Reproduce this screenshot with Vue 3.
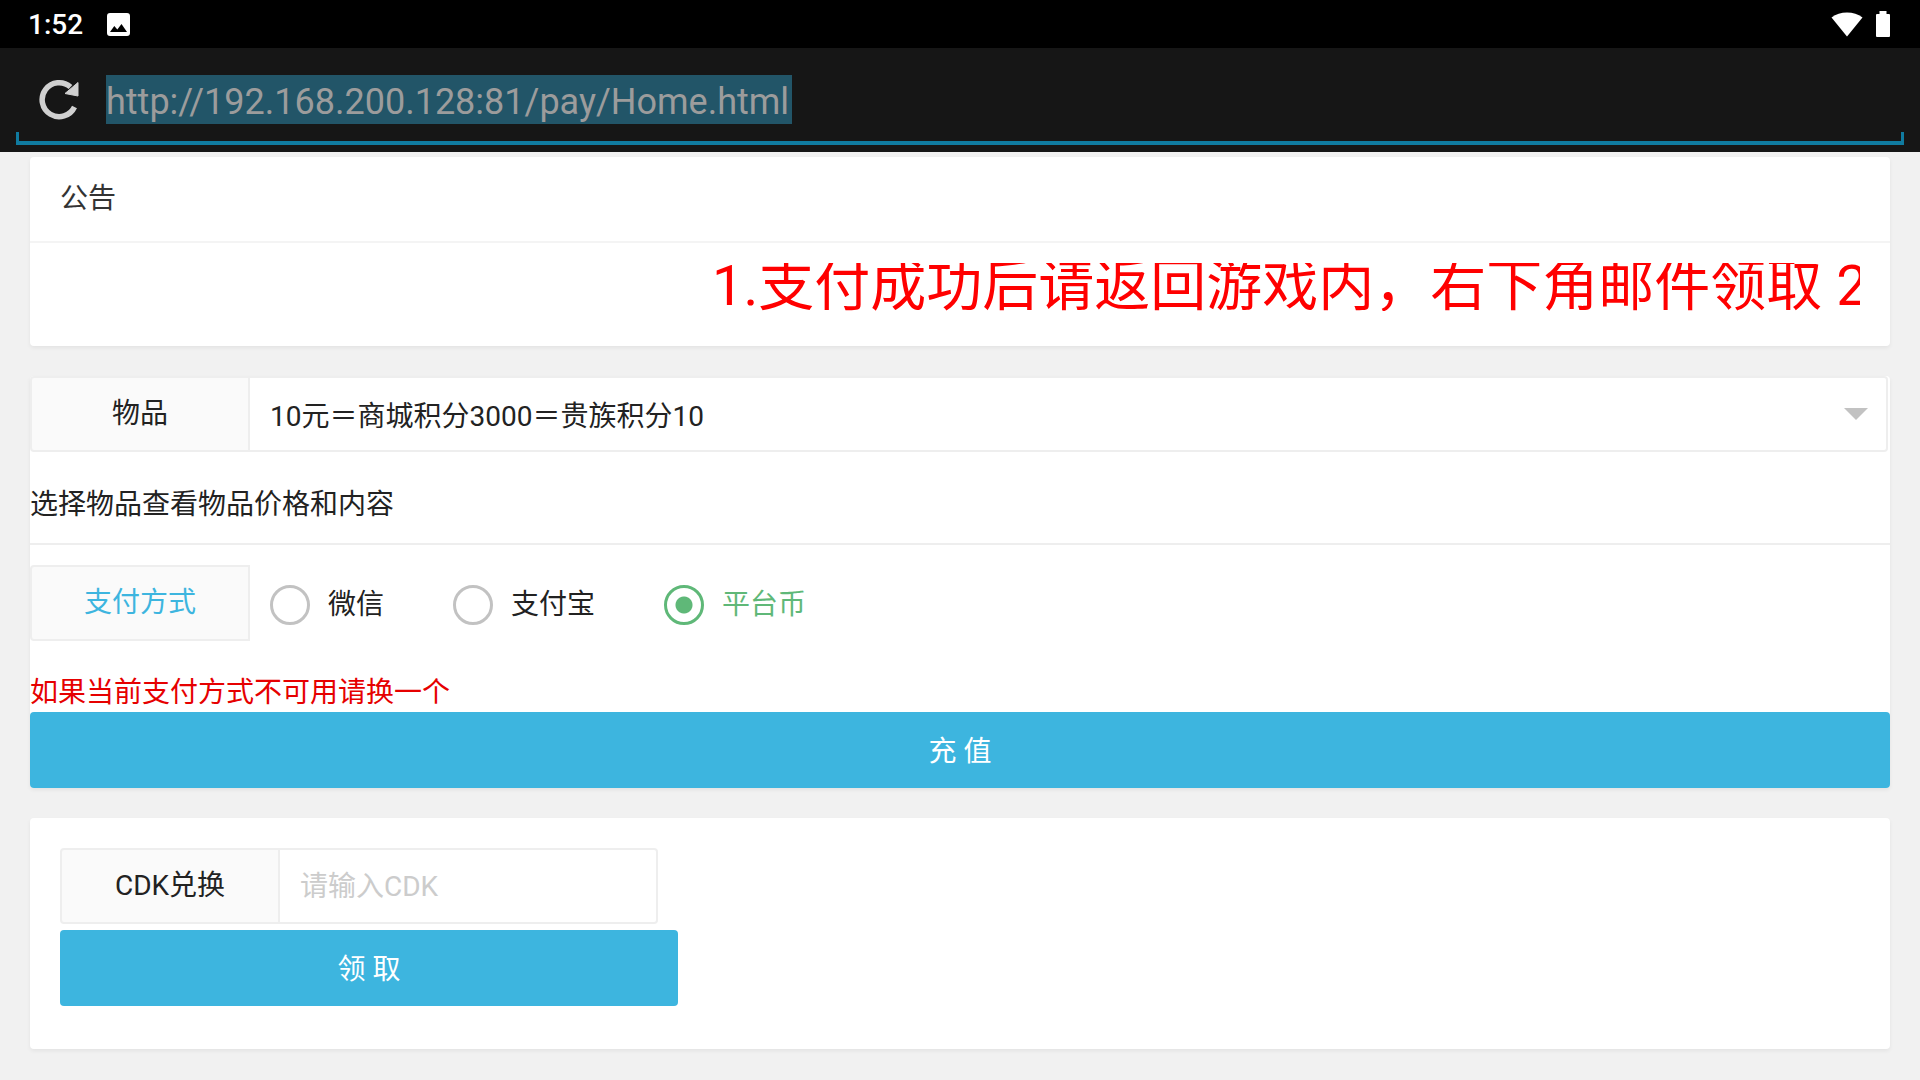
<template>
  <div class="screen">
    <header class="status-bar">
      <div class="status-left">
        <span class="clock">1:52</span>
        <svg class="icon-picture" viewBox="0 0 23 23" aria-hidden="true">
          <path fill="#fff" fill-rule="evenodd" d="M3 0h17a3 3 0 0 1 3 3v17a3 3 0 0 1-3 3H3a3 3 0 0 1-3-3V3a3 3 0 0 1 3-3zM3 19h17l-5.500-8-4.200 5.500-3-3.500z" />
        </svg>
      </div>
      <div class="status-right">
        <svg class="icon-wifi" viewBox="0 0 32 25" aria-hidden="true">
          <path fill="#fff" d="M16 24.500L.5 5.600C5 2 10 .4 16 .4S27 2 31.500 5.600z" />
        </svg>
        <svg class="icon-battery" viewBox="0 0 14 26" aria-hidden="true">
          <path fill="#fff" d="M3.500 0h7v3H13a1 1 0 0 1 1 1v21a1 1 0 0 1-1 1H1a1 1 0 0 1-1-1V4a1 1 0 0 1 1-1h2.500z" />
        </svg>
      </div>
    </header>

    <div class="address-bar">
      <button type="button" class="refresh" aria-label="refresh">
        <svg viewBox="0 0 42 42" aria-hidden="true">
          <path d="M36.500 29A17 17 0 1 1 32.500 9" fill="none" stroke="#d0d0d0" stroke-width="5.500" />
          <path d="M40 4.500V18L27 15.500z" fill="#d0d0d0" stroke="#d0d0d0" stroke-width="1" />
        </svg>
      </button>
      <input v-model="url" class="url" type="text" aria-label="url" spellcheck="false">
    </div>

    <main class="page">
      <section class="card notice">
        <h2 class="card-header">公告</h2>
        <div class="card-body">
          <div class="marquee">
            <span class="marquee-text">1.支付成功后请返回游戏内，右下角邮件领取 2</span>
          </div>
        </div>
      </section>

      <form class="card pay-form" @submit.prevent>
        <div class="form-item item-row">
          <label class="form-label" for="goods">物品</label>
          <div class="select-wrap">
            <select id="goods" v-model="goods" class="form-select">
              <option v-for="g in goodsList" :key="g.value" :value="g.value">{{ g.label }}</option>
            </select>
            <i class="arrow"></i>
          </div>
        </div>

        <p class="goods-info">选择物品查看物品价格和内容</p>

        <div class="form-item pay-row" role="radiogroup" aria-labelledby="pay-label">
          <span id="pay-label" class="form-label active">支付方式</span>
          <div class="radio-group">
            <label v-for="p in payTypes" :key="p.value" class="radio" :class="{ checked: payType === p.value }">
              <input v-model="payType" type="radio" name="pay" :value="p.value">
              <span>{{ p.label }}</span>
            </label>
          </div>
        </div>

        <p class="pay-tip">如果当前支付方式不可用请换一个</p>
        <button type="submit" class="btn">充 值</button>
      </form>

      <form class="card cdk-form" @submit.prevent>
        <div class="form-item cdk-row">
          <label class="form-label" for="cdk">CDK兑换</label>
          <input id="cdk" v-model="cdk" class="form-input" type="text" placeholder="请输入CDK">
        </div>
        <button type="submit" class="btn btn-cdk">领 取</button>
      </form>
    </main>
  </div>
</template>

<script setup>
import { ref } from 'vue'

const url = ref('http://192.168.200.128:81/pay/Home.html')

const goodsList = [
  { value: 1, label: '10元＝商城积分3000＝贵族积分10' }
]
const goods = ref(1)

const payTypes = [
  { value: 'wechat', label: '微信' },
  { value: 'alipay', label: '支付宝' },
  { value: 'coin', label: '平台币' }
]
const payType = ref('coin')

const cdk = ref('')
</script>

<style>
body {
  background-color: #f1f1f1;
}
</style>

<style scoped>
.screen,
.screen input,
.screen select,
.screen button {
  font-family: Roboto, "Noto Sans CJK SC", sans-serif;
}

.screen {
  font-size: 28px;
  line-height: 40px;
  color: #222;
}

.screen * {
  box-sizing: border-box;
}

/* Status bar */
.status-bar {
  display: flex;
  justify-content: space-between;
  align-items: center;
  height: 48px;
  padding: 0 30px 0 28px;
  background-color: #000;
  color: #fff;
}

.status-left {
  display: flex;
  align-items: center;
  gap: 24px;
}

.status-right {
  display: flex;
  align-items: center;
  gap: 13px;
}

.clock {
  font-weight: 500;
  padding-top: 2px;
}

.icon-picture {
  width: 23px;
  height: 23px;
}

.icon-wifi {
  width: 32px;
  height: 25px;
}

.icon-battery {
  width: 14px;
  height: 26px;
}

/* Address bar */
.address-bar {
  position: relative;
  display: flex;
  align-items: center;
  gap: 26px;
  height: 104px;
  padding: 0 38px 2px;
  background-color: #161616;
}

.address-bar::after {
  content: '';
  position: absolute;
  left: 16px;
  right: 16px;
  bottom: 7px;
  height: 9px;
  border: 3px solid #107ba0;
  border-bottom-width: 4px;
  border-top: none;
}

.refresh {
  width: 42px;
  height: 42px;
  padding: 0;
  border: none;
  background: none;
}

.refresh svg {
  display: block;
  width: 42px;
  height: 42px;
}

.url {
  width: 686px;
  height: 49px;
  padding: 6px 0 0;
  border: none;
  background-color: #225568;
  color: #9c9c9c;
  font-size: 36px;
}

/* Page */
.page {
  display: flex;
  flex-direction: column;
  gap: 30px;
  padding: 5px 30px 30px;
}

.card {
  background-color: #fff;
  border-radius: 4px;
  box-shadow: 0 2px 4px rgba(0, 0, 0, 0.06);
}

.card-header {
  margin: 0;
  padding: 0 30px;
  border-bottom: 2px solid #f4f4f4;
  font-size: 28px;
  font-weight: 400;
  line-height: 84px;
  color: #333;
}

.card-body {
  padding: 20px 30px 35px;
}

.marquee {
  height: 48px;
  padding-left: 652px;
  overflow: hidden;
  white-space: nowrap;
  font-size: 56px;
  line-height: 46px;
  color: #f00;
}

.marquee-text {
  display: block;
}

/* Forms */
.form-item {
  display: flex;
  height: 76px;
}

.form-label {
  flex: none;
  width: 220px;
  border: 2px solid #eee;
  border-radius: 4px 0 0 4px;
  background-color: #fafafa;
  line-height: 72px;
  text-align: center;
}

.form-label.active {
  color: #3db5df;
}

.item-row {
  padding-right: 2px;
}

.select-wrap {
  position: relative;
  flex: 1;
}

.form-select,
.form-input {
  width: 100%;
  height: 76px;
  padding: 0 20px;
  border: 2px solid #eee;
  border-left: none;
  border-radius: 0 4px 4px 0;
  background-color: #fff;
  color: #222;
  font-size: 28px;
  appearance: none;
}

.form-select {
  padding-top: 4px;
}

.arrow {
  position: absolute;
  top: 32px;
  right: 20px;
  border: 12px solid transparent;
  border-top-color: #c2c2c2;
  border-bottom: none;
  pointer-events: none;
}

.goods-info {
  margin: 0;
  padding: 33px 0 18px;
  border-bottom: 2px solid #eee;
}

.pay-row {
  margin-top: 20px;
}

.radio-group {
  display: flex;
  align-items: center;
  gap: 69px;
  padding: 4px 0 0 20px;
}

.radio {
  display: flex;
  align-items: center;
  gap: 18px;
}

.radio input {
  width: 40px;
  height: 40px;
  margin: 0;
  border: 3px solid #c2c2c2;
  border-radius: 50%;
  appearance: none;
}

.radio.checked {
  color: #5fb878;
}

.radio.checked input {
  border-color: #5fb878;
  background: radial-gradient(circle, #5fb878 8px, transparent 9px);
}

.pay-tip {
  margin: 0;
  padding-top: 33px;
  line-height: 38px;
  color: #e60000;
}

.btn {
  display: block;
  width: 100%;
  height: 76px;
  padding: 0 0 2px;
  border: none;
  border-radius: 4px;
  background-color: #3db5df;
  color: #fff;
  font-size: 28px;
}

.cdk-form {
  padding: 30px 30px 43px;
}

.cdk-row {
  width: 598px;
}

.btn-cdk {
  width: 618px;
  margin-top: 6px;
}

.form-input::placeholder {
  color: #ccc;
  opacity: 1;
}
</style>
